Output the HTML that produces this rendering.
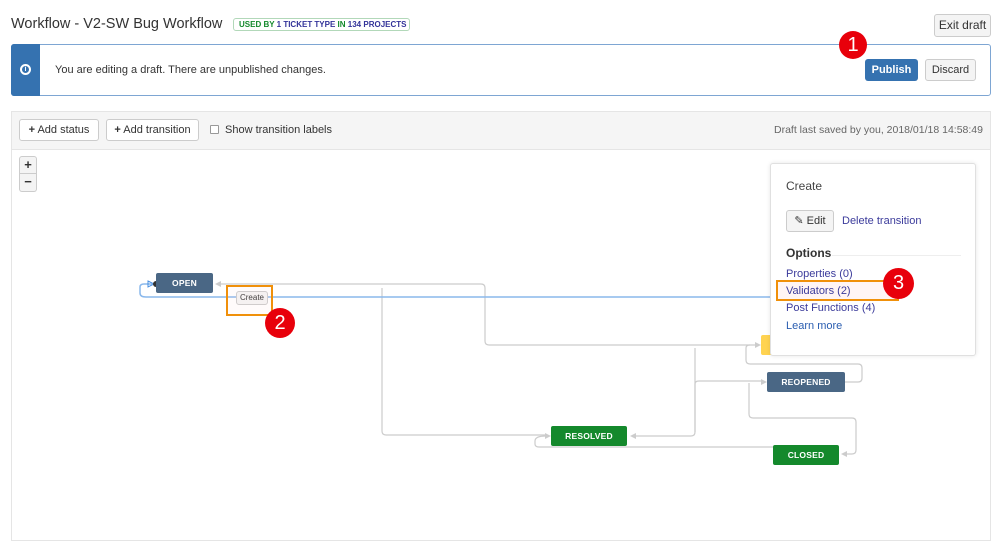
<!DOCTYPE html>
<html><head><meta charset="utf-8"><style>
*{box-sizing:border-box;margin:0;padding:0}
body{width:998px;height:537px;overflow:hidden;background:#fff;font-family:"Liberation Sans",Arial,sans-serif;color:#333;position:relative;font-size:11px}
.a{position:absolute}
.btn{position:absolute;border:1px solid #ccc;border-radius:3px;background:#f4f4f4;color:#333;font-size:11px;text-align:center}
.st{position:absolute;color:#fff;font-weight:bold;font-size:8.5px;text-align:center;border-radius:2px;letter-spacing:.2px}
.circ{position:absolute;border-radius:50%;background:#e8000b;color:#fff;font-size:20px;text-align:center}
.lk{position:absolute;color:#3b3b9b;font-size:11px}
</style></head><body>
<div class="a" style="left:11px;top:16px;font-size:14.5px;color:#333">Workflow - V2-SW Bug Workflow</div>
<div class="a" style="left:233px;top:18px;width:177px;height:13px;border:1px solid #b2d8b9;border-radius:3px;font-size:8px;font-weight:bold;line-height:11px;padding-left:5px;color:#14892c;white-space:nowrap">USED BY <span style="color:#333399">1 TICKET TYPE</span> IN <span style="color:#333399">134 PROJECTS</span></div>
<div class="btn" style="left:934px;top:14px;width:57px;height:23px;line-height:21px;font-size:12px">Exit draft</div>

<div class="a" style="left:11px;top:44px;width:980px;height:52px;border:1px solid #7ea6d3;border-radius:3px"></div>
<div class="a" style="left:11px;top:44px;width:29px;height:52px;background:#3572b0;border-radius:3px 0 0 3px"></div>
<div class="a" style="left:20px;top:64px;width:11px;height:11px;border-radius:50%;border:2px solid #fff;color:#fff;font-size:7px;font-weight:bold;text-align:center;line-height:7px">i</div>
<div class="a" style="left:55px;top:64px;font-size:11px">You are editing a draft. There are unpublished changes.</div>
<div class="a" style="left:865px;top:59px;width:53px;height:22px;background:#3572b0;border-radius:3px;color:#fff;font-weight:bold;font-size:11px;text-align:center;line-height:22px">Publish</div>
<div class="btn" style="left:925px;top:59px;width:51px;height:22px;line-height:20px">Discard</div>
<div class="circ" style="left:839px;top:31px;width:28px;height:28px;line-height:28px">1</div>

<div class="a" style="left:11px;top:111px;width:980px;height:430px;border:1px solid #e5e5e5"></div>
<div class="a" style="left:12px;top:112px;width:978px;height:38px;background:#f5f5f5;border-bottom:1px solid #e5e5e5"></div>
<div class="btn" style="left:19px;top:119px;width:80px;height:22px;line-height:20px;background:#fff"><b>+</b> Add status</div>
<div class="btn" style="left:106px;top:119px;width:93px;height:22px;line-height:20px;background:#fff"><b>+</b> Add transition</div>
<div class="a" style="left:210px;top:125px;width:9px;height:9px;border:1px solid #999;background:#fff;border-radius:1px"></div>
<div class="a" style="left:225px;top:124px">Show transition labels</div>
<div class="a" style="right:15px;top:124px;color:#666;font-size:10.5px">Draft last saved by you, 2018/01/18 14:58:49</div>

<div class="btn" style="left:19px;top:156px;width:18px;height:18px;line-height:16px;font-weight:bold;font-size:13px;border-radius:3px 3px 0 0">+</div>
<div class="btn" style="left:19px;top:174px;width:18px;height:18px;line-height:15px;font-weight:bold;font-size:13px;border-radius:0 0 3px 3px;border-top:none">−</div>

<svg class="a" style="left:0;top:0" width="998" height="537">
<g fill="none" stroke="#ccc" stroke-width="1.2">
<path d="M218 284H481q4 0 4 4V341q0 4 4 4H755"/>
<path d="M382 288V431q0 4 4 4H545"/>
<path d="M634 436H691q4 0 4-4V348"/>
<path d="M695 432V384q0-3 4-3H761"/>
<path d="M546 436q-11 0-11 5v3q0 3 4 3H773"/>
<path d="M845 382H858q4 0 4-4V368q0-4-4-4H750q-4 0-4-4V348q0-3 4-3"/>
<path d="M749 383V414q0 4 4 4H852q4 0 4 4V450q0 4-4 4H845"/>
</g>
<g fill="#ccc"><path d="M215 284l6-3v6z"/><path d="M630 436l6-3v6z"/><path d="M761 345l-6-3v6z"/><path d="M767 382l-6-3v6z"/><path d="M551 436l-6-3v6z"/><path d="M841 454l6-3v6z"/></g>
<path d="M154 297H146q-6 0-6-4v-6q0-3 4-3h8M152 297H776" fill="none" stroke="#8ab8ec" stroke-width="1.5"/>
<path d="M148 281l6 3-6 3z" fill="none" stroke="#4a90e2"/>
<circle cx="156" cy="284" r="3" fill="#333"/>
</svg>

<div class="st" style="left:156px;top:273px;width:57px;height:20px;line-height:20px;background:#4a6785">OPEN</div>
<div class="a" style="left:236px;top:291px;width:32px;height:14px;border:1px solid #ccc;border-radius:3px;background:#f5f5f5;font-size:8px;text-align:center;line-height:12px">Create</div>
<div class="a" style="left:226px;top:285px;width:47px;height:31px;border:2px solid #f0900a;background:rgba(255,200,200,.08)"></div>
<div class="circ" style="left:265px;top:308px;width:30px;height:30px;line-height:30px">2</div>
<div class="a" style="left:761px;top:335px;width:90px;height:20px;background:#ffd351;border-radius:2px"></div>
<div class="st" style="left:767px;top:372px;width:78px;height:20px;line-height:20px;background:#4a6785">REOPENED</div>
<div class="st" style="left:551px;top:426px;width:76px;height:20px;line-height:20px;background:#14892c">RESOLVED</div>
<div class="st" style="left:773px;top:445px;width:66px;height:20px;line-height:20px;background:#14892c">CLOSED</div>

<div class="a" style="left:770px;top:163px;width:206px;height:193px;background:#fff;border:1px solid #e0e0e0;border-radius:3px;box-shadow:0 0 4px rgba(0,0,0,.1)"></div>
<div class="a" style="left:786px;top:179px;font-size:12px;color:#444">Create</div>
<div class="btn" style="left:786px;top:210px;width:48px;height:22px;line-height:20px;font-size:11px">✎ Edit</div>
<div class="lk" style="left:842px;top:215px">Delete transition</div>
<div class="a" style="left:786px;top:246px;font-weight:bold;font-size:12px;color:#333">Options</div>
<div class="a" style="left:832px;top:255px;width:129px;height:1px;background:#eee"></div>
<div class="lk" style="left:786px;top:268px">Properties (0)</div>
<div class="a" style="left:776px;top:280px;width:123px;height:21px;border:2px solid #f0900a;background:#fff5f5"></div>
<div class="lk" style="left:786px;top:285px">Validators (2)</div>
<div class="lk" style="left:786px;top:302px">Post Functions (4)</div>
<div class="lk" style="left:786px;top:320px;color:#2a5db0">Learn more</div>
<div class="circ" style="left:883px;top:268px;width:31px;height:31px;line-height:31px">3</div>
</body></html>
